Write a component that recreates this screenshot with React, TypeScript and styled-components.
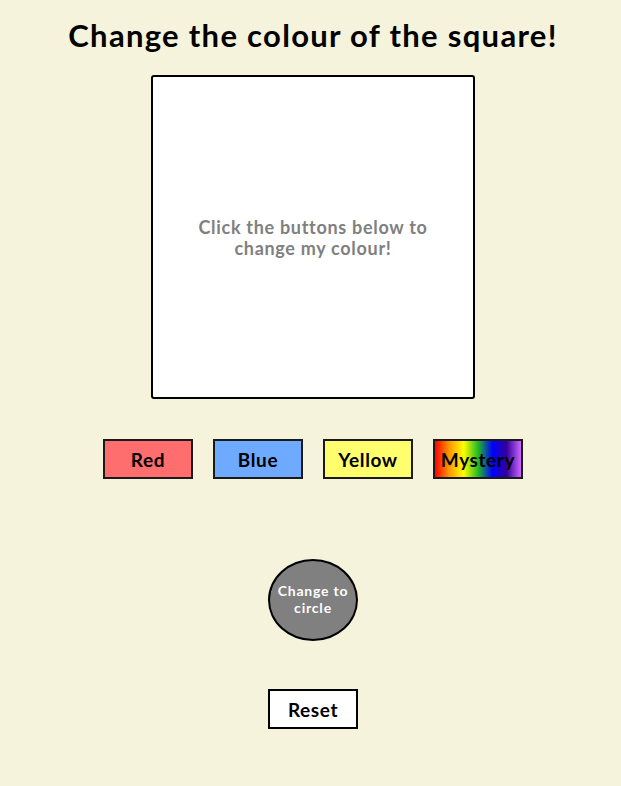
import React from "react";
import styled, { createGlobalStyle } from "styled-components";

const GlobalStyle = createGlobalStyle`
  html, body {
    margin: 0;
    background: #f5f3dc;
  }
  body {
    font-family: "Lato", "Open Sans", sans-serif;
  }
`;

const colours = [
  { label: "Red", fill: "#ff6e6e" },
  { label: "Blue", fill: "#6eaaff" },
  { label: "Yellow", fill: "#ffff6e" },
  {
    label: "Mystery",
    fill: "linear-gradient(to right, #ff0000, #ff9900, #ffff00, #22bb22, #0000ff, #330099, #cc66ff)",
  },
];

export default function App() {
  return (
    <>
      <GlobalStyle />
      <Page>
        <Title>Change the colour of the square!</Title>
        <Square>
          <Hint>
            Click the buttons below to
            <br />
            change my colour!
          </Hint>
        </Square>
        <ButtonRow>
          {colours.map((c) => (
            <ColourButton key={c.label} $fill={c.fill}>
              {c.label}
            </ColourButton>
          ))}
        </ButtonRow>
        <CircleButton>
          Change to
          <br />
          circle
        </CircleButton>
        <ResetButton>Reset</ResetButton>
      </Page>
    </>
  );
}

const Page = styled.div`
  display: flex;
  flex-direction: column;
  align-items: center;
  padding: 12px 0 0 5px;
`;

const Title = styled.h1`
  margin: 0;
  font-size: 31px;
  font-weight: 700;
  letter-spacing: 1.3px;
  color: #000;
  line-height: 46px;
`;

const Square = styled.div`
  margin-top: 17px;
  width: 320px;
  height: 320px;
  background: #fff;
  border: 2px solid #000;
  border-radius: 3px;
  display: flex;
  align-items: center;
  justify-content: center;
`;

const Hint = styled.p`
  margin: 0;
  text-align: center;
  color: #808080;
  font-size: 18px;
  font-weight: 700;
  letter-spacing: 0.7px;
  line-height: 21px;
  padding-top: 2px;
`;

const ButtonRow = styled.div`
  display: flex;
  gap: 20px;
  margin-top: 40px;
`;

const ColourButton = styled.button<{ $fill: string }>`
  width: 90px;
  height: 40px;
  padding: 0;
  background: ${(p) => p.$fill};
  border: 2px solid #1a1a1a;
  font-family: inherit;
  font-size: 19px;
  font-weight: 700;
  letter-spacing: 0.6px;
  color: #000;
  white-space: nowrap;
`;

const CircleButton = styled.button`
  margin-top: 80px;
  width: 90px;
  height: 82px;
  padding: 0;
  border-radius: 50%;
  background: #808080;
  border: 2px solid #000;
  color: #fff;
  font-family: inherit;
  font-size: 14px;
  font-weight: 700;
  letter-spacing: 0.8px;
  line-height: 17px;
  padding-bottom: 3px;
`;

const ResetButton = styled.button`
  margin-top: 48px;
  width: 90px;
  height: 40px;
  padding: 0;
  background: #fff;
  border: 2px solid #000;
  font-family: inherit;
  font-size: 19px;
  font-weight: 700;
  letter-spacing: 0.6px;
  color: #000;
`;
